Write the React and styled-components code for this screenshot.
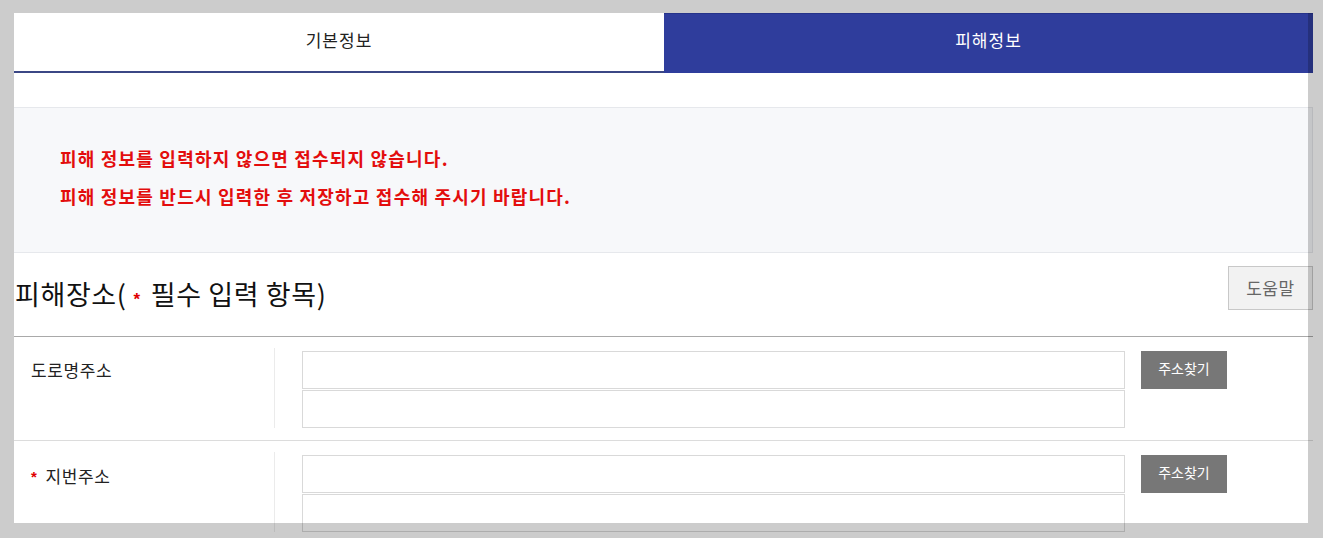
import React from "react";
import styled, { createGlobalStyle } from "styled-components";

const Global = createGlobalStyle`
  html { margin: 0; padding: 0; background: #ffffff; overflow: hidden; height: 100%; }
  body { margin: 0; padding: 0; min-height: 100%; font-family: "Noto Sans CJK KR", "Noto Sans", sans-serif; color: #222; }
  * { box-sizing: border-box; }
`;

const Panel = styled.div`
  position: relative;
  margin: 13px 0 0 14px;
  width: 1294px;
  height: 510px;
  &::after {
    content: "";
    position: absolute;
    inset: 0;
    box-shadow: 0 0 0 3000px rgba(0, 0, 0, 0.2);
    pointer-events: none;
    z-index: 10;
  }
`;

const Content = styled.div`
  width: 1299px;
`;

const TabBar = styled.div`
  display: grid;
  grid-template-columns: 650px 649px;
  height: 60px;
`;

const Tab = styled.div`
  display: flex;
  align-items: center;
  justify-content: center;
  padding-bottom: 6px;
  font-size: 17px;
  line-height: 24px;
  letter-spacing: 1px;
  background: ${(p) => (p.$active ? "#2f3d9c" : "#ffffff")};
  color: ${(p) => (p.$active ? "#ffffff" : "#222222")};
  border-top: 1px solid ${(p) => (p.$active ? "#26338a" : "#ffffff")};
  border-bottom: 2px solid ${(p) => (p.$active ? "#2f3d9c" : "#3b4785")};
`;

const Notice = styled.div`
  margin-top: 34px;
  height: 146px;
  background: #f7f8fa;
  border: 1px solid #e6e8ec;
  border-left: none;
  padding: 31px 0 0 46px;
`;

const NoticeLine = styled.p`
  margin: 0;
  font-size: 18px;
  line-height: 38px;
  font-weight: 700;
  letter-spacing: 1.2px;
  color: #e30d0d;
`;

const SectionHead = styled.div`
  display: flex;
  justify-content: space-between;
  align-items: flex-start;
  height: 84px;
  padding-top: 13px;
  border-bottom: 1px solid #a9a9a9;
`;

const Heading = styled.h2`
  margin: 6px 0 0 1px;
  font-size: 27px;
  line-height: 44px;
  font-weight: 400;
  color: #111;
  letter-spacing: 0.6px;
`;

const Star = styled.span`
  color: #e00000;
  font-family: "Liberation Sans", sans-serif;
  font-size: ${(p) => p.$size ?? 17}px;
  font-weight: 700;
  margin: 0 ${(p) => p.$gap ?? 10}px 0 ${(p) => p.$lead ?? 7}px;
  position: relative;
  top: ${(p) => p.$top ?? 0}px;
`;

const HelpButton = styled.button`
  width: 85px;
  height: 44px;
  background: #f2f2f2;
  border: 1px solid #c8c8c8;
  color: #666;
  font-family: inherit;
  font-size: 17px;
  letter-spacing: 0.6px;
  padding: 0 0 2px 0;
`;

const Row = styled.div`
  display: grid;
  grid-template-columns: 261px 1fr;
  padding: 11px 0 12px;
  border-bottom: 1px solid #dcdcdc;
`;

const LabelCell = styled.div`
  border-right: 1px solid #ebebeb;
  height: 80px;
  padding: ${(p) => (p.$required ? 12 : 10)}px 0 0 17px;
  font-size: 17px;
  line-height: 24px;
  letter-spacing: 0.6px;
  color: #222;
  display: flex;
  align-items: flex-start;
`;

const FieldCell = styled.div`
  display: flex;
  align-items: flex-start;
  gap: 16px;
  padding: 3px 0 0 27px;
`;

const InputStack = styled.div`
  display: flex;
  flex-direction: column;
  gap: 1px;
  width: 823px;
`;

const TextInput = styled.input`
  display: block;
  width: 100%;
  height: 38px;
  border: 1px solid #d9d9d9;
  background: transparent;
  outline: none;
  font-family: inherit;
  font-size: 15px;
  padding: 0 10px;
`;

const SearchButton = styled.button`
  width: 86px;
  height: 38px;
  background: #777777;
  border: none;
  color: #ffffff;
  font-family: inherit;
  font-size: 14px;
  line-height: 20px;
  padding: 0 0 5px 0;
`;

function AddressRow({ label, required }) {
  return (
    <Row>
      <LabelCell $required={required}>
        {required && (
          <Star $size={15} $lead={0} $gap={8} $top={1}>
            *
          </Star>
        )}
        {label}
      </LabelCell>
      <FieldCell>
        <InputStack>
          <TextInput type="text" />
          <TextInput type="text" />
        </InputStack>
        <SearchButton type="button">주소찾기</SearchButton>
      </FieldCell>
    </Row>
  );
}

export default function App() {
  return (
    <>
      <Global />
      <Panel>
        <Content>
          <TabBar>
            <Tab>기본정보</Tab>
            <Tab $active>피해정보</Tab>
          </TabBar>
          <Notice>
            <NoticeLine>피해 정보를 입력하지 않으면 접수되지 않습니다.</NoticeLine>
            <NoticeLine>피해 정보를 반드시 입력한 후 저장하고 접수해 주시기 바랍니다.</NoticeLine>
          </Notice>
          <SectionHead>
            <Heading>
              피해장소(<Star>*</Star>필수 입력 항목)
            </Heading>
            <HelpButton type="button">도움말</HelpButton>
          </SectionHead>
          <AddressRow label="도로명주소" />
          <AddressRow label="지번주소" required />
        </Content>
      </Panel>
    </>
  );
}
